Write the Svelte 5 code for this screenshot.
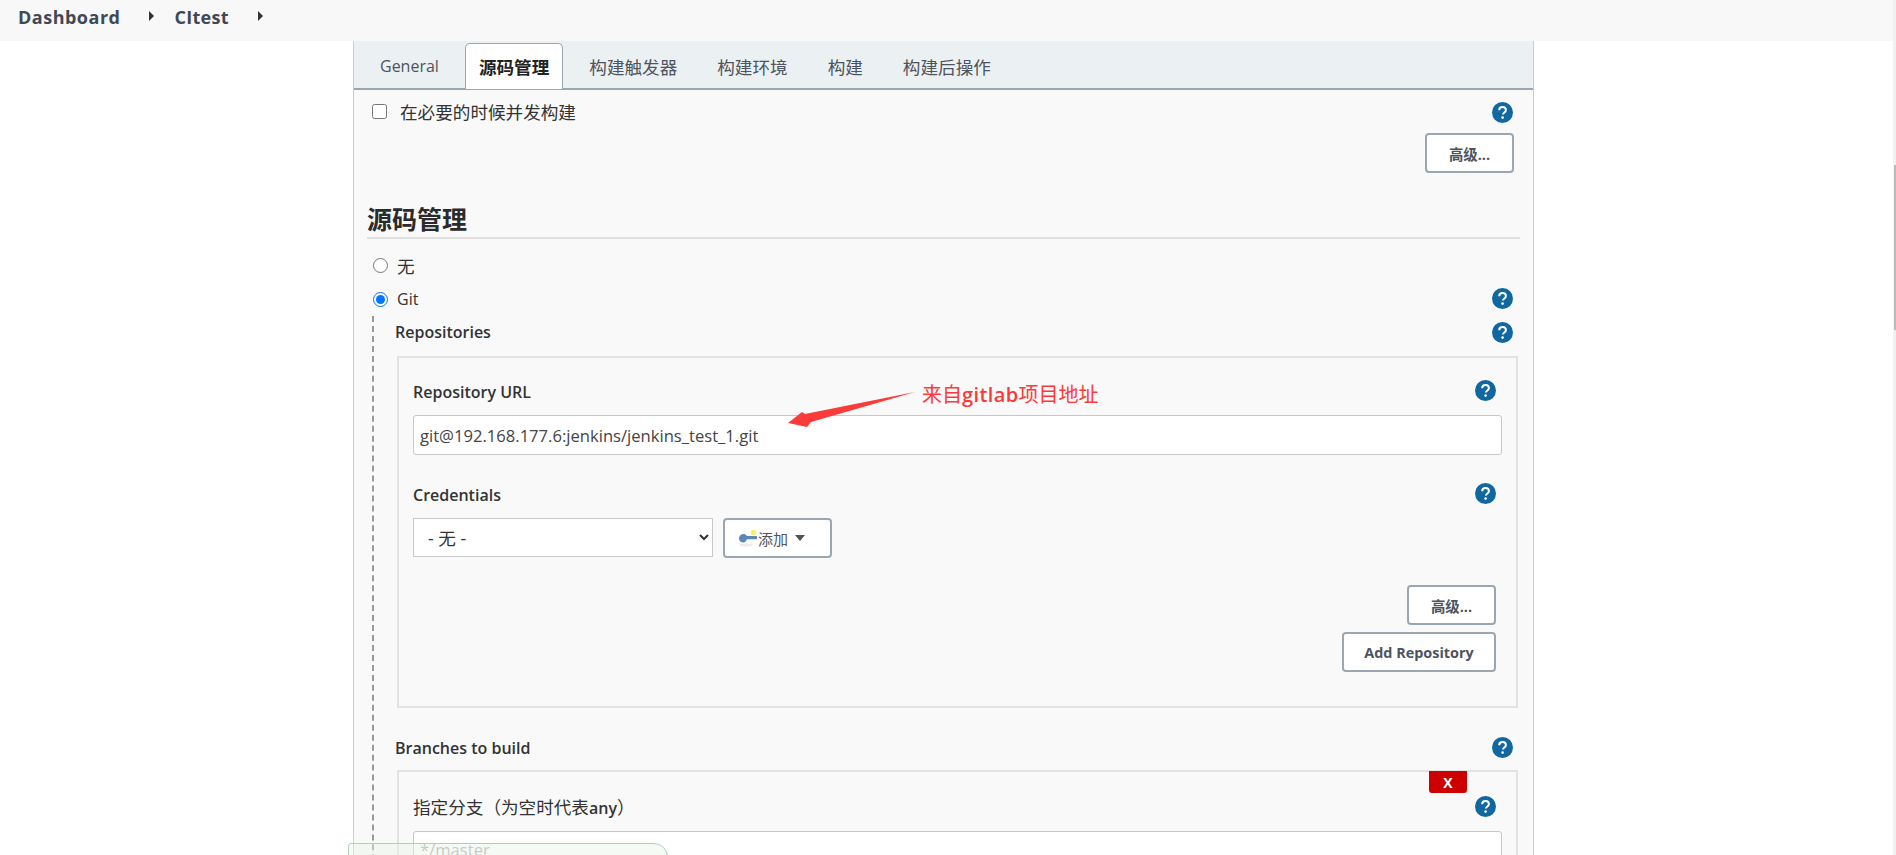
<script>
	const tabs = ['General', '源码管理', '构建触发器', '构建环境', '构建', '构建后操作'];
	let activeTab = $state(1);
	let scm = $state('git');
	let repoUrl = $state('git@192.168.177.6:jenkins/jenkins_test_1.git');
</script>

{#snippet help()}
	<svg class="help" viewBox="0 0 21 21" aria-hidden="true">
		<circle cx="10.5" cy="10.5" r="10.5" fill="#10689f" />
		<path d="M7.2 8.2c0-2 1.4-3.2 3.4-3.2s3.3 1.2 3.3 2.9c0 1.4-.8 2.1-1.8 2.8-.8.6-1.1 1-1.1 1.9" fill="none" stroke="#fff" stroke-width="2" />
		<circle cx="10.6" cy="15.6" r="1.3" fill="#fff" />
	</svg>
{/snippet}

<div class="page">
	<header class="breadcrumbs">
		<span class="crumb wide">Dashboard</span>
		<span class="caret"></span>
		<span class="crumb narrow">CItest</span>
		<span class="caret"></span>
	</header>

	<main class="panel">
		<nav class="tabs">
			{#each tabs as tab, i}
				<button class="tab" class:active={i === activeTab} onclick={() => (activeTab = i)}>{tab}</button>
			{/each}
		</nav>

		<div class="body">
			<div class="row concurrent">
				<label class="check"><input type="checkbox" />在必要的时候并发构建</label>
				{@render help()}
			</div>
			<div class="actions top"><button class="btn adv">高级...</button></div>

			<h2 class="section">源码管理</h2>

			<div class="row none"><label class="radio cn"><input type="radio" bind:group={scm} value="none" />无</label></div>
			<div class="row git">
				<label class="radio"><input type="radio" bind:group={scm} value="git" />Git</label>
				{@render help()}
			</div>

			<div class="nested">
				<div class="row head">
					<span class="label">Repositories</span>
					{@render help()}
				</div>

				<div class="box repo">
					<div class="row inner">
						<span class="label">Repository URL</span>
						{@render help()}
					</div>
					<input class="text" type="text" bind:value={repoUrl} />

					<div class="row inner cred">
						<span class="label">Credentials</span>
						{@render help()}
					</div>
					<div class="cred-row">
						<select class="select"><option>- 无 -</option></select>
						<button class="btn add">
							<svg class="key" viewBox="0 0 18 18" aria-hidden="true">
								<ellipse cx="7" cy="16" rx="6.5" ry="1.6" fill="#ececec" />
								<circle cx="14.5" cy="3.5" r="2.8" fill="#f6f06a" />
								<path d="M0 9.5C0 6.5 2.2 5 4.5 5S7.5 6.4 8 7h10v3.2H8c-.6.8-1.6 3.3-3.5 3.3C2.2 13.5 0 12.2 0 9.5z" fill="#5b86b8" />
							</svg>
							<span class="add-text">添加</span>
							<span class="down"></span>
						</button>
					</div>

					<div class="actions adv2"><button class="btn adv">高级...</button></div>
					<div class="actions adv2b"><button class="btn addrepo">Add Repository</button></div>
				</div>

				<div class="row head branches">
					<span class="label">Branches to build</span>
					{@render help()}
				</div>

				<div class="box branch">
					<button class="remove">X</button>
					<div class="row inner">
						<span class="label"><span class="cn-label">指定分支（为空时代表</span>any<span class="cn-label">）</span></span>
						{@render help()}
					</div>
					<input class="text master" type="text" placeholder="*/master" />
				</div>
			</div>
		</div>
	</main>

	<!-- red annotation drawn on top of the screenshot -->
	<div class="note">来自<b>gitlab</b>项目地址</div>
	<svg class="arrow" width="140" height="50" viewBox="780 385 140 50" aria-hidden="true">
		<path d="M915 392 L805 414 L802 412 L788 423 L807 427 L811 422 Z" fill="#fb3a3a" />
	</svg>

	<div class="saved"></div>
	<div class="scrollbar"><div class="thumb"></div></div>
</div>

<style>
	:global(body) {
		margin: 0;
		background: #fff;
	}

	.page {
		position: relative;
		height: 855px;
		overflow: hidden;
		font-family: 'Open Sans', 'Noto Sans CJK SC', sans-serif;
		font-size: 16px;
		color: #333;
	}

	.breadcrumbs {
		display: flex;
		align-items: center;
		height: 41px;
		margin-right: 3px;
		padding-left: 18px;
		padding-bottom: 8px;
		box-sizing: border-box;
		background: #f8f8f8;
	}

	.crumb {
		font-size: 18px;
		font-weight: 700;
		color: #3f4955;
	}

	.crumb.wide {
		letter-spacing: 0.5px;
	}

	.crumb.narrow {
		letter-spacing: 0.3px;
	}

	.caret {
		width: 0;
		height: 0;
		margin: -1px 20px 0 29px;
		border-left: 5px solid #333;
		border-top: 5px solid transparent;
		border-bottom: 5px solid transparent;
	}

	.panel {
		width: 1181px;
		margin-left: 353px;
		box-sizing: border-box;
		border-left: 1px solid #ccc;
		border-right: 1px solid #ccc;
		background: #f9f9f9;
	}

	.tabs {
		display: flex;
		align-items: flex-end;
		gap: 12px;
		height: 49px;
		padding-left: 12px;
		box-sizing: border-box;
		background: #ebf0f2;
		border-bottom: 2px solid #9aa7b2;
	}

	.tab {
		height: 46px;
		margin-bottom: -1px;
		padding: 0 14px;
		border: 0;
		border-radius: 5px 5px 0 0;
		background: none;
		font: inherit;
		font-size: 17.6px;
		color: #4d545d;
	}

	.tab:first-child {
		font-size: 16px;
	}

	.tab.active {
		border: 1px solid #9aa7b2;
		border-bottom: 0;
		padding: 0 13px;
		background: #fff;
		font-weight: 700;
		color: #222;
	}

	.body {
		padding: 0 13px 0 13px;
	}

	.row {
		display: flex;
		align-items: center;
		justify-content: space-between;
	}

	.help {
		width: 21px;
		height: 21px;
		margin-right: 7px;
		flex: none;
	}

	.concurrent {
		height: 43px;
		margin-left: 5px;
	}

	.concurrent .help {
		margin-top: 2px;
	}

	.git .help {
		margin-bottom: 2px;
	}

	.check,
	.radio {
		display: flex;
		align-items: center;
		font-size: 17.6px;
		color: #333;
	}

	.check input {
		width: 15px;
		height: 15px;
		margin: 0 13px 0 0;
	}

	.radio {
		font-size: 16px;
	}

	.radio.cn {
		font-size: 17.6px;
	}

	.radio input {
		width: 15px;
		height: 15px;
		margin: 0 9px 0 6px;
	}

	.actions {
		display: flex;
		justify-content: flex-end;
		padding-right: 6px;
	}

	.actions.top {
		padding-right: 6px;
	}

	.btn {
		height: 40px;
		padding: 0;
		border: 2px solid #9aa7b2;
		border-radius: 4px;
		background: #fff;
		font: inherit;
		font-size: 14.4px;
		font-weight: 700;
		color: #4d545d;
		box-sizing: border-box;
	}

	.adv {
		width: 89px;
	}

	.section {
		margin: 28px 0 0;
		font-size: 25px;
		font-weight: 700;
		line-height: 36px;
		border-bottom: 2px solid #e0e0e0;
		color: #2b2b2b;
	}

	.none {
		height: 34px;
		margin-top: 9px;
	}

	.git {
		height: 34px;
	}

	.nested {
		margin-left: 5px;
		padding-left: 21px;
		border-left: 2px dashed #999;
	}

	.head {
		height: 32px;
	}

	.label {
		font-size: 16px;
		font-weight: 600;
		color: #333;
	}

	.cn-label {
		font-size: 17.6px;
		font-weight: 400;
	}

	.box {
		border: 2px solid #e2e2e2;
		box-sizing: border-box;
		padding: 0 14px;
		margin: 8px 2px 0 2px;
		position: relative;
	}

	.repo {
		height: 352px;
	}

	.inner {
		height: 36px;
		margin-top: 16px;
	}

	.inner .help {
		margin-right: 6px;
		margin-bottom: 3px;
	}

	.text {
		display: block;
		width: 100%;
		height: 40px;
		margin-top: 5px;
		padding: 0 6px;
		box-sizing: border-box;
		border: 1px solid #c8c8c8;
		border-radius: 3px;
		background: #fff;
		font: inherit;
		font-size: 16.6px;
		color: #444;
	}

	.text::placeholder {
		color: #aaa;
	}

	.cred {
		margin-top: 22px;
	}

	.cred-row {
		display: flex;
		align-items: flex-start;
		gap: 10px;
		margin-top: 5px;
	}

	.select {
		width: 300px;
		height: 39px;
		padding-left: 10px;
		border: 1px solid #c8c8c8;
		border-radius: 0;
		background: #fff;
		font: inherit;
		font-size: 17.6px;
		color: #333;
	}

	.add {
		display: flex;
		align-items: center;
		width: 109px;
		padding-left: 14px;
		font-weight: 400;
		font-size: 14.4px;
	}

	.key {
		width: 18px;
		height: 18px;
		flex: none;
	}

	.add-text {
		margin-left: 1px;
		font-size: 15px;
	}

	.down {
		width: 0;
		height: 0;
		margin-left: 7px;
		border-top: 6px solid #4d545d;
		border-left: 5px solid transparent;
		border-right: 5px solid transparent;
	}

	.adv2 {
		margin-top: 27px;
	}

	.adv2b {
		margin-top: 7px;
	}

	.addrepo {
		width: 154px;
	}

	.branches {
		height: 34px;
		margin-top: 23px;
	}

	.branches .help {
		margin-bottom: 2px;
	}

	.branch {
		height: 200px;
		margin-top: 5px;
	}

	.branch .inner {
		margin-top: 16px;
	}

	.branch .inner .help {
		margin-bottom: 0;
	}

	.branch .text {
		margin-top: 7px;
	}

	.master {
		padding-bottom: 4px;
	}

	.remove {
		position: absolute;
		top: -1px;
		right: 49px;
		width: 38px;
		height: 22px;
		padding: 0;
		border: 0;
		border-radius: 0 0 3px 3px;
		background: #c00;
		font: inherit;
		font-size: 14px;
		font-weight: 700;
		color: #fff;
	}

	.note {
		position: absolute;
		left: 922px;
		top: 382px;
		font-size: 20px;
		line-height: 26px;
		color: #fb3a3a;
	}

	.note b {
		font-weight: 600;
		letter-spacing: 0.4px;
	}

	.arrow {
		position: absolute;
		left: 780px;
		top: 385px;
	}

	.saved {
		position: absolute;
		left: 348px;
		top: 843px;
		width: 320px;
		height: 30px;
		box-sizing: border-box;
		border: 1px solid #b0cfc0;
		border-radius: 3px 14px 0 0;
		background: rgba(232, 245, 232, 0.45);
	}

	.scrollbar {
		position: absolute;
		right: 0;
		top: 0;
		bottom: 0;
		width: 3px;
		background: #f1f1f1;
	}

	.thumb {
		width: 2px;
		height: 165px;
		margin: 165px 0 0 1px;
		background: #bbb;
	}
</style>
